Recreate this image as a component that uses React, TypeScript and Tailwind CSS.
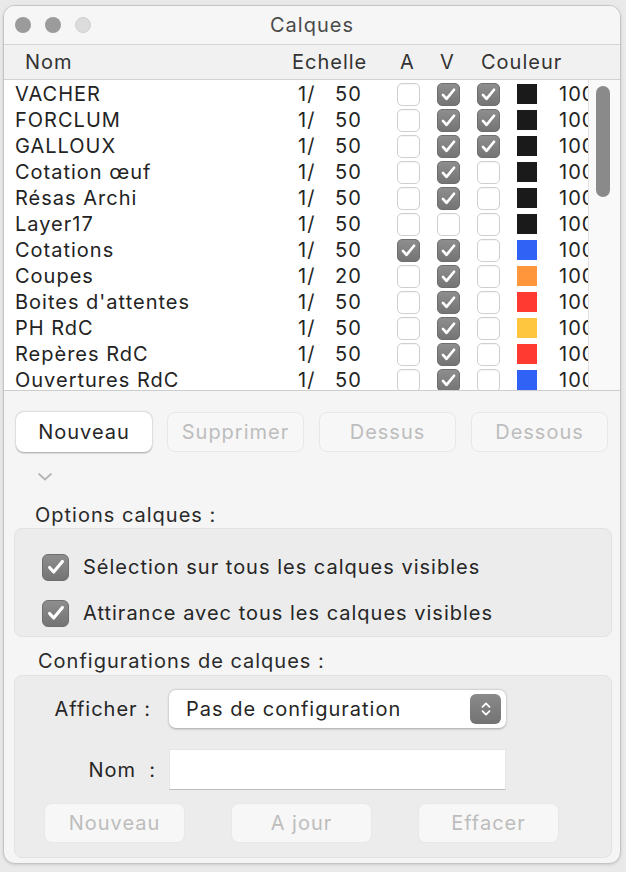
import React from "react";

type Row = { name: string; s: string; a: boolean; v: boolean; x: boolean; c: string };

const rows: Row[] = [
  { name: "VACHER", s: "50", a: false, v: true, x: true, c: "#1a1a1a" },
  { name: "FORCLUM", s: "50", a: false, v: true, x: true, c: "#1a1a1a" },
  { name: "GALLOUX", s: "50", a: false, v: true, x: true, c: "#1a1a1a" },
  { name: "Cotation œuf", s: "50", a: false, v: true, x: false, c: "#1a1a1a" },
  { name: "Résas Archi", s: "50", a: false, v: true, x: false, c: "#1a1a1a" },
  { name: "Layer17", s: "50", a: false, v: false, x: false, c: "#1a1a1a" },
  { name: "Cotations", s: "50", a: true, v: true, x: false, c: "#2f62f5" },
  { name: "Coupes", s: "20", a: false, v: true, x: false, c: "#ff963b" },
  { name: "Boites d'attentes", s: "50", a: false, v: true, x: false, c: "#ff3a30" },
  { name: "PH RdC", s: "50", a: false, v: true, x: false, c: "#fec63f" },
  { name: "Repères RdC", s: "50", a: false, v: true, x: false, c: "#ff3a30" },
  { name: "Ouvertures RdC", s: "50", a: false, v: true, x: false, c: "#2f62f5" },
];

function Check({ on, size }: { on: boolean; size: "sm" | "lg" }) {
  const box = size === "sm" ? "w-[23px] h-[23px] rounded-[5px]" : "w-[27px] h-[27px] rounded-[6px]";
  if (!on) {
    return <div className={`${box} bg-white border border-[#cfcfcf] shadow-[inset_0_1px_1px_rgba(0,0,0,0.04)]`} />;
  }
  return (
    <div className={`${box} flex items-center justify-center bg-gradient-to-b from-[#8e8e8e] to-[#747474] border border-[#6e6e6e]`}>
      <svg viewBox="0 0 24 24" className={size === "sm" ? "w-[19px] h-[19px]" : "w-[22px] h-[22px]"}>
        <path d="M5 12.5l4.5 5L19 6" fill="none" stroke="white" strokeWidth="3.4" strokeLinecap="round" strokeLinejoin="round" />
      </svg>
    </div>
  );
}

function Btn({ label, enabled, w }: { label: string; enabled?: boolean; w: string }) {
  return (
    <div
      className={`${w} h-[40px] rounded-[8px] flex items-center justify-center text-[20px] ${
        enabled
          ? "bg-white text-[#262626] shadow-[0_0.5px_2px_rgba(0,0,0,0.35)]"
          : "bg-[#f7f7f7] text-[#bdbdbd] border border-[#e8e8e8]"
      }`}
    >
      {label}
    </div>
  );
}

export default function App() {
  return (
    <div className="w-[626px] h-[872px] bg-[#e9e9e9] pl-[3px] pt-[5px] font-['Inter',sans-serif] tracking-[1px]">
      <div className="w-[618px] h-[859px] rounded-[12px] border border-[#c4c4c4] bg-[#f5f5f5] overflow-hidden flex flex-col shadow-[0_1px_3px_rgba(0,0,0,0.12)]">
        {/* Title bar */}
        <div className="h-[39px] shrink-0 grid grid-cols-[1fr_auto_1fr] items-center bg-[#f6f6f6] border-b border-[#d6d6d6]">
          <div className="flex items-center gap-[14px] pl-[11px]">
            <div className="w-[16px] h-[16px] rounded-full bg-[#9b9b9b]" />
            <div className="w-[16px] h-[16px] rounded-full bg-[#9b9b9b]" />
            <div className="w-[16px] h-[16px] rounded-full bg-[#dcdcdc] border border-[#cfcfcf]" />
          </div>
          <div className="text-[20px] text-[#4a4a4a]">Calques</div>
          <div />
        </div>
        {/* Header */}
        <div className="h-[35px] shrink-0 flex items-center bg-[#f1f1f1] border-b border-[#d2d2d2] text-[20px] text-[#333] whitespace-nowrap">
          <span className="w-[288px] pl-[21px] shrink-0">Nom</span>
          <span className="w-[108px] shrink-0">Echelle</span>
          <span className="w-[40px] shrink-0">A</span>
          <span className="w-[41px] shrink-0">V</span>
          <span>Couleur</span>
        </div>
        {/* Table body */}
        <div className="h-[311px] shrink-0 flex border-b border-[#cdcdcd] overflow-hidden">
          <div className="w-[584px] shrink-0 bg-white overflow-hidden pt-[1px]">
            {rows.map((r) => (
              <div key={r.name} className="h-[26px] flex items-center text-[20px] text-[#232323] whitespace-nowrap">
                <span className="w-[294px] pl-[11px] shrink-0">{r.name}</span>
                <span className="w-[37px] shrink-0">1/</span>
                <span className="w-[62px] shrink-0">{r.s}</span>
                <div className="w-[40px] shrink-0"><Check on={r.a} size="sm" /></div>
                <div className="w-[40px] shrink-0"><Check on={r.v} size="sm" /></div>
                <div className="w-[40px] shrink-0"><Check on={r.x} size="sm" /></div>
                <div className="w-[20px] h-[20px] shrink-0" style={{ backgroundColor: r.c }} />
                <span className="ml-[22px] shrink-0">100</span>
              </div>
            ))}
          </div>
          <div className="flex-1 bg-[#f9f9f9] border-l border-[#e2e2e2] pt-[6px] pl-[7px]">
            <div className="w-[14px] h-[111px] rounded-full bg-[#8a8a8a]" />
          </div>
        </div>
        {/* Lower panel */}
        <div className="flex-1 flex flex-col pt-[21px]">
          <div className="flex gap-[15px] pl-[12px]">
            <Btn label="Nouveau" enabled w="w-[136px]" />
            <Btn label="Supprimer" w="w-[137px]" />
            <Btn label="Dessus" w="w-[137px]" />
            <Btn label="Dessous" w="w-[137px]" />
          </div>
          <div className="mt-[19px] pl-[33px] h-[11px]">
            <svg viewBox="0 0 16 11" className="w-[16px] h-[11px]">
              <path d="M2 3l6 5.5 6-5.5" fill="none" stroke="#b5b5b5" strokeWidth="1.8" strokeLinecap="round" strokeLinejoin="round" />
            </svg>
          </div>
          <div className="mt-[21px] h-[24px] leading-[24px] pl-[31px] text-[20px] text-[#2a2a2a]">Options calques :</div>
          <div className="mt-[1px] ml-[10px] w-[598px] h-[109px] rounded-[8px] bg-[#ececec] border border-[#e2e2e2] flex flex-col pt-[23px] gap-[16px] pl-[27px]">
            <div className="flex items-center gap-[14px]">
              <Check on size="lg" />
              <span className="text-[20px] text-[#262626]">Sélection sur tous les calques visibles</span>
            </div>
            <div className="flex items-center gap-[14px]">
              <Check on size="lg" />
              <span className="text-[20px] text-[#262626]">Attirance avec tous les calques visibles</span>
            </div>
          </div>
          <div className="mt-[12px] h-[24px] leading-[24px] pl-[34px] text-[20px] text-[#2a2a2a]">Configurations de calques :</div>
          <div className="mt-[2px] ml-[10px] w-[598px] h-[183px] rounded-[8px] bg-[#ececec] border border-[#e2e2e2] flex flex-col pt-[14px]">
            <div className="flex items-center">
              <span className="w-[136px] text-right text-[20px] text-[#262626]">Afficher :</span>
              <div className="ml-[18px] w-[337px] h-[38px] rounded-[7px] bg-white shadow-[0_0.5px_2.5px_rgba(0,0,0,0.3)] flex items-center justify-between pl-[17px] pr-[5px]">
                <span className="text-[20px] text-[#262626]">Pas de configuration</span>
                <div className="w-[31px] h-[30px] rounded-[6px] bg-gradient-to-b from-[#8a8a8a] to-[#737373] flex items-center justify-center">
                  <svg viewBox="0 0 16 22" className="w-[14px] h-[20px]">
                    <path d="M4 8.5l4-4 4 4M4 13.5l4 4 4-4" fill="none" stroke="white" strokeWidth="2" strokeLinecap="round" strokeLinejoin="round" />
                  </svg>
                </div>
              </div>
            </div>
            <div className="flex items-center mt-[21px]">
              <span className="w-[141px] text-right text-[20px] text-[#262626] whitespace-pre">{"Nom  :"}</span>
              <div className="ml-[13px] w-[337px] h-[41px] bg-white border-t border-x border-[#e6e6e6] border-b border-b-[#bdbdbd]" />
            </div>
            <div className="flex mt-[13px] pl-[29px] gap-[46px]">
              <Btn label="Nouveau" w="w-[141px]" />
              <Btn label="A jour" w="w-[141px]" />
              <Btn label="Effacer" w="w-[141px]" />
            </div>
          </div>
        </div>
      </div>
    </div>
  );
}
